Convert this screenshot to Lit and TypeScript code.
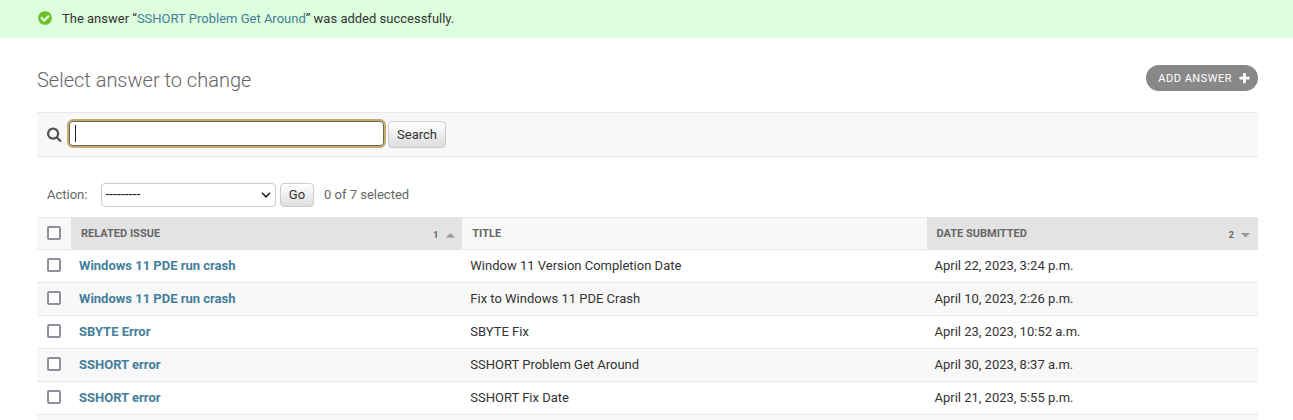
import { LitElement, html, css, svg } from "lit";
import { customElement } from "lit/decorators.js";

const YES = svg`<path fill="#70bf2b" d="M1412 734q0-28-18-46l-91-90q-19-19-45-19t-45 19l-408 407-226-226q-19-19-45-19t-45 19l-91 90q-18 18-18 46 0 27 18 45l362 362q19 19 45 19 27 0 46-19l543-543q18-18 18-45zm252 162q0 209-103 385.5t-279.5 279.5-385.5 103-385.5-103-279.5-279.5-103-385.5 103-385.5 279.5-279.5 385.5-103 385.5 103 279.5 279.5 103 385.5z"/>`;
const SEARCH = svg`<path fill="#555" d="M1216 832q0-185-131.5-316.5t-316.5-131.5-316.5 131.5-131.5 316.5 131.5 316.5 316.5 131.5 316.5-131.5 131.5-316.5zm512 832q0 52-38 90t-90 38q-54 0-90-38l-343-342q-179 124-399 124-143 0-273.5-55.5t-225-150-150-225-55.5-273.5 55.5-273.5 150-225 225-150 273.5-55.5 273.5 55.5 225 150 150 225 55.5 273.5q0 220-124 399l343 343q37 37 37 90z"/>`;
const ADD = svg`<path fill="#fff" d="M1600 736v192q0 40-28 68t-68 28h-416v416q0 40-28 68t-68 28h-192q-40 0-68-28t-28-68v-416h-416q-40 0-68-28t-28-68v-192q0-40 28-68t68-28h416v-416q0-40 28-68t68-28h192q40 0 68 28t28 68v416h416q40 0 68 28t28 68z"/>`;

const ROWS = [
  ["Windows 11 PDE run crash", "Window 11 Version Completion Date", "April 22, 2023, 3:24 p.m."],
  ["Windows 11 PDE run crash", "Fix to Windows 11 PDE Crash", "April 10, 2023, 2:26 p.m."],
  ["SBYTE Error", "SBYTE Fix", "April 23, 2023, 10:52 a.m."],
  ["SSHORT error", "SSHORT Problem Get Around", "April 30, 2023, 8:37 a.m."],
  ["SSHORT error", "SSHORT Fix Date", "April 21, 2023, 5:55 p.m."],
];

@customElement("app-root")
export class AppRoot extends LitElement {
  static styles = css`
    :host {
      display: block;
      height: 420px;
      overflow: hidden;
      background: #fff;
      color: #333;
      font: 13px/17px Roboto, sans-serif;
    }
    * { box-sizing: border-box; }
    svg { display: block; flex: none; }
    a { color: #447e9b; text-decoration: none; }
    .message {
      display: flex;
      align-items: center;
      gap: 9px;
      height: 38px;
      padding: 0 0 2px 37px;
      background: #dfd;
    }
    .content { padding: 27px 35px 0 37px; }
    .heading {
      display: flex;
      justify-content: space-between;
      height: 47px;
    }
    h1 {
      margin: 3px 0 0;
      font-size: 20px;
      line-height: 24px;
      font-weight: 300;
      color: #666;
    }
    .add {
      display: flex;
      align-items: center;
      gap: 6px;
      height: 26px;
      padding: 0 7px 0 12px;
      border-radius: 13px;
      background: #888;
      color: #fff;
      font-size: 11px;
      letter-spacing: 0.5px;
    }
    .toolbar {
      display: flex;
      align-items: flex-start;
      height: 45px;
      padding: 6px 0 0 10px;
      border: solid #e8e8e8;
      border-width: 1px 0;
      background: #f8f8f8;
    }
    .toolbar svg { margin: 8px 5px 0 0; }
    .field {
      width: 319px;
      height: 29px;
      padding: 4px 6px;
      border: 2px solid #c3ad72;
      border-radius: 6px;
      background: #fff;
      box-shadow: inset 0 0 0 1px #6b6552;
    }
    .caret { width: 1px; height: 17px; background: #222; }
    .button {
      display: flex;
      align-items: center;
      justify-content: center;
      border: 1px solid #ccc;
      border-radius: 4px;
      background: linear-gradient(#fff, #ddd);
      color: #333;
    }
    .search { width: 58px; height: 27px; margin: 2px 0 0 2px; }
    .actions {
      display: flex;
      align-items: center;
      height: 24px;
      margin: 26px 0 10px;
      padding-left: 10px;
      color: #666;
    }
    .label { padding-bottom: 2px; }
    .select {
      display: flex;
      align-items: center;
      justify-content: space-between;
      width: 175px;
      height: 24px;
      margin: 0 4px 0 14px;
      padding: 0 4px 0 3px;
      border: 1px solid #ccc;
      border-radius: 4px;
      background: #fff;
      color: #222;
      font-size: 14px;
    }
    .select span { padding-bottom: 1px; }
    .go { width: 34px; height: 24px; margin-right: 9.5px; padding: 0 1px 2px 0; }
    .row {
      display: grid;
      grid-template-columns: 34px 391.3px 464.7px 331px;
      height: 33px;
      border-bottom: 1px solid #e8e8e8;
    }
    .row:nth-child(odd) { background: #f8f8f8; }
    .cell { padding: 7px 8px 0; white-space: nowrap; }
    .cell:last-child { padding-left: 7.5px; }
    .cell a { font-weight: 700; }
    .check { padding: 8px 10px 0; }
    .box {
      width: 14px;
      height: 14px;
      border: 2px solid #8f8f9d;
      border-radius: 2px;
      background: #fff;
    }
    .head { border-top: 1px solid #e8e8e8; }
    .th {
      display: flex;
      justify-content: space-between;
      padding: 8px 7.5px 0 10px;
      font-size: 11px;
      font-weight: 700;
      color: #666;
      line-height: 16px;
    }
    .th:last-child { padding-left: 9.5px; }
    .sorted { background: #e3e3e3; margin: -1px 0; padding-top: 9px; }
    .sort {
      display: flex;
      gap: 7.5px;
      padding-top: 2px;
      font-size: 9px;
      line-height: 15px;
    }
    .sort svg { margin-top: 5px; }
  `;

  private sort(n: string, points: string) {
    return html`<span class="sort">${n}<svg width="9" height="5" viewBox="0 0 9 5"><polygon fill="#999" points=${points} /></svg></span>`;
  }

  render() {
    return html`
      <div class="message">
        <svg width="16" height="16" viewBox="0 0 1792 1792">${YES}</svg>
        <span>The answer “<a>SSHORT Problem Get Around</a>” was added successfully.</span>
      </div>
      <div class="content">
        <div class="heading">
          <h1>Select answer to change</h1>
          <a class="add">ADD ANSWER<svg width="13" height="13" viewBox="0 0 1792 1792">${ADD}</svg></a>
        </div>
        <div class="toolbar">
          <svg width="15" height="15" viewBox="64 64 1728 1728">${SEARCH}</svg>
          <div class="field"><div class="caret"></div></div>
          <div class="button search">Search</div>
        </div>
        <div class="actions">
          <span class="label">Action:</span>
          <div class="select">
            <span>---------</span>
            <svg width="10" height="6" viewBox="0 0 10 6"><path d="M1 0.8L5 4.8L9 0.8" fill="none" stroke="#222" stroke-width="1.6" /></svg>
          </div>
          <div class="button go">Go</div>
          <span class="label">0 of 7 selected</span>
        </div>
        <div class="table">
          <div class="row head">
            <div class="check"><div class="box"></div></div>
            <div class="th sorted"><span>RELATED ISSUE</span>${this.sort("1", "0,4.5 4.5,0 9,4.5")}</div>
            <div class="th"><span>TITLE</span></div>
            <div class="th sorted"><span>DATE SUBMITTED</span>${this.sort("2", "0,0 9,0 4.5,4.5")}</div>
          </div>
          ${ROWS.map(
            ([issue, title, date]) => html`<div class="row">
              <div class="check"><div class="box"></div></div>
              <div class="cell"><a>${issue}</a></div>
              <div class="cell">${title}</div>
              <div class="cell">${date}</div>
            </div>`
          )}
          <div class="row"></div>
        </div>
      </div>
    `;
  }
}
